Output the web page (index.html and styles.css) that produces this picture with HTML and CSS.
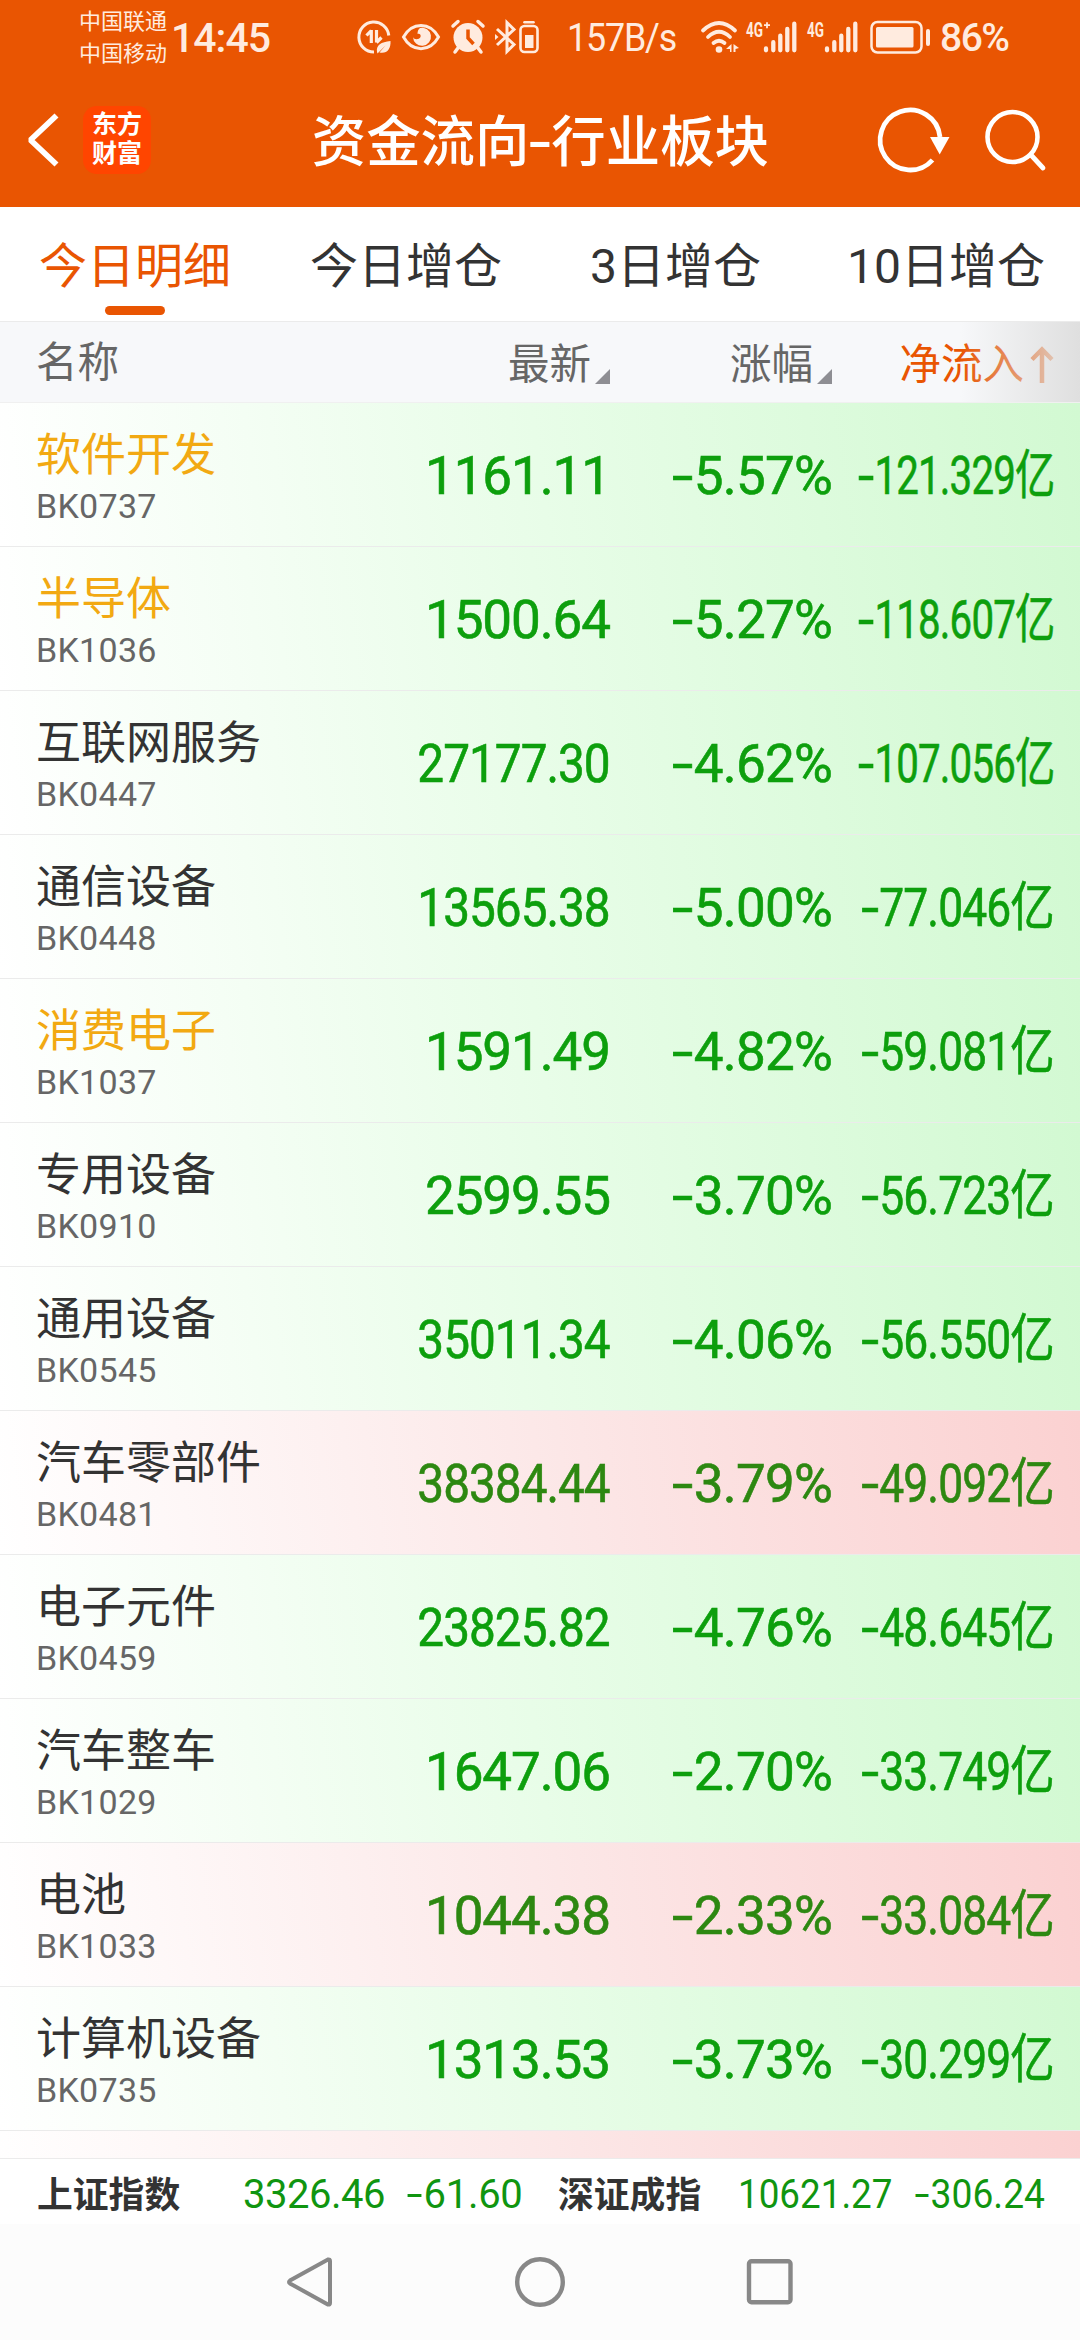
FILE: index.html
```html
<!DOCTYPE html>
<html lang="zh-CN">
<head>
    <meta charset="UTF-8" />
    <meta name="viewport" content="width=device-width, initial-scale=1.0">
    <title>资金流向-行业板块</title>
    <link rel="stylesheet" href="styles.css">
</head>
<body>
    <!-- System status bar -->
    <div class="status-bar">
        <div class="carriers">
            <span>中国联通</span>
            <span>中国移动</span>
        </div>
        <span class="clock">14:45</span>
        <div class="status-icons">
            <svg class="icon-data" width="36" height="36" viewBox="0 0 36 36">
                <path d="M32.800 16.500A15 15 0 1 0 18 33" fill="none" stroke="currentColor" stroke-width="3"/>
                <path d="M15.300 11v13M15.300 11.500l-4.800 5M20.500 11v12.500M20.500 23.500l5-5" fill="none" stroke="currentColor" stroke-width="3.200"/>
                <path d="M21 33c-1-7 4-10 13.500-11 .5 8-3.500 13-11 11.500l6-7-8 8z" fill="currentColor"/>
            </svg>
            <svg class="icon-eye" width="40" height="28" viewBox="0 0 40 28">
                <path d="M2.500 14C11-1.500 29-1.500 37.500 14 29 29.500 11 29.500 2.500 14z" fill="none" stroke="currentColor" stroke-width="3"/>
                <path d="M19 5a9 9 0 1 1-7 9c1 3 6 3 7.500 0 1-3-2-4-3-3 0-3 1-5 2.500-6z" fill="currentColor"/>
            </svg>
            <svg class="icon-alarm" width="34" height="34" viewBox="0 0 34 34">
                <circle cx="17" cy="17.500" r="14.500" fill="currentColor"/>
                <path d="M2 6l5-4.500M32 6l-5-4.500M7 28l-3 4M27 28l3 4" stroke="currentColor" stroke-width="3.500" stroke-linecap="round"/>
                <path d="M17 9.500v8.500l5.500 6" fill="none" stroke="#e95502" stroke-width="3.500"/>
            </svg>
            <svg class="icon-bluetooth" width="22" height="34" viewBox="0 0 22 34">
                <path d="M2 25L19 9.500l-7-7v29l7-7L2 9" fill="none" stroke="currentColor" stroke-width="3"/>
                <path d="M0 14l3.500 3L0 20z" fill="currentColor"/>
            </svg>
            <svg class="icon-device" width="20" height="34" viewBox="0 0 20 34">
                <path d="M5.500 2.200h9" stroke="currentColor" stroke-width="2.600" stroke-linecap="round"/>
                <rect x="1.500" y="6" width="17" height="26" rx="4" fill="none" stroke="currentColor" stroke-width="2.600"/>
                <rect x="6" y="15" width="8.500" height="13" fill="currentColor"/>
            </svg>
        </div>
        <span class="net-speed">157B/s</span>
        <svg class="icon-wifi" width="38" height="34" viewBox="0 0 38 34">
            <path d="M2 10.500q16-15 32 0M7 17q11-10.500 22 0M12.500 23q5.500-4.500 11 0" fill="none" stroke="currentColor" stroke-width="3.800" stroke-linecap="round"/>
            <circle cx="18" cy="29.500" r="3.300" fill="currentColor"/>
            <path d="M30.500 24v8H29v-3h-4zM32.500 24l5.500 4-3.500 1v3h-2z" fill="currentColor"/>
        </svg>
        <svg class="icon-signal" width="52" height="34" viewBox="0 0 52 34">
            <text x="0" y="17" class="signal-type" textLength="17" lengthAdjust="spacingAndGlyphs">4G</text>
            <path d="M18 5.200h6M21 2.200v6" stroke="currentColor" stroke-width="1.800"/>
            <path d="M20 28.500v1.800M27.300 22.200v8.100M34.300 15.700v14.600M41.300 9v21.300M48.300 3.700v26.600" stroke="currentColor" stroke-width="4.300" stroke-linecap="round"/>
        </svg>
        <svg class="icon-signal second" width="52" height="34" viewBox="0 0 52 34">
            <text x="0" y="17" class="signal-type" textLength="17" lengthAdjust="spacingAndGlyphs">4G</text>
            <path d="M20 28.500v1.800M27.300 22.200v8.100M34.300 15.700v14.600M41.300 9v21.300M48.300 3.700v26.600" stroke="currentColor" stroke-width="4.300" stroke-linecap="round"/>
        </svg>
        <svg class="icon-battery" width="62" height="34" viewBox="0 0 62 34">
            <rect x="1.500" y="2" width="50" height="30.500" rx="6" fill="none" stroke="currentColor" stroke-width="2.500"/>
            <rect x="6" y="7" width="37.500" height="20.500" rx="1.500" fill="currentColor"/>
            <path d="M58 11v13" stroke="currentColor" stroke-width="4" stroke-linecap="round"/>
        </svg>
        <span class="battery-level">86%</span>
    </div>

    <!-- App header -->
    <div class="header">
        <svg class="back-btn" width="36" height="56" viewBox="0 0 36 56">
            <path d="M31.500 3.500L5.500 28l26 24.500" fill="none" stroke="currentColor" stroke-width="5.800" stroke-linejoin="bevel"/>
        </svg>
        <div class="logo"><span>东方</span><span>财富</span></div>
        <h1>资金流向<span class="dash">-</span>行业板块</h1>
        <svg class="refresh-btn" width="74" height="68" viewBox="0 0 74 68">
            <path d="M54.500 54A30 30 0 1 1 62 31" fill="none" stroke="currentColor" stroke-width="4.800"/>
            <path d="M52 31h19.500l-9.800 17.500z" fill="currentColor"/>
        </svg>
        <svg class="search-btn" width="64" height="64" viewBox="0 0 64 64">
            <circle cx="29.500" cy="29" r="25" fill="none" stroke="currentColor" stroke-width="4.600"/>
            <path d="M48 47l12 13" stroke="currentColor" stroke-width="4.800" stroke-linecap="round"/>
        </svg>
    </div>

    <div class="tabs">
        <div class="tab active">今日明细</div>
        <div class="tab">今日增仓</div>
        <div class="tab">3日增仓</div>
        <div class="tab">10日增仓</div>
    </div>

    <div class="table-head">
        <span class="col-name">名称</span>
        <span class="col sortable">最新</span>
        <span class="col sortable">涨幅</span>
        <span class="col sorted">净流入<svg width="24" height="38" viewBox="0 0 24 38"><path d="M12 37V4M2 13.500L12 3.500l10 10" fill="none" stroke="currentColor" stroke-width="4.500"/></svg></span>
    </div>

    <div class="table">
        <div class="row">
            <div class="sector"><b class="held">软件开发</b><small>BK0737</small></div>
            <span class="value">1161.11</span>
            <span class="value percent"><i>-</i>5.57%</span>
            <span class="value flow-long"><i>-</i>121.329亿</span>
        </div>
        <div class="row">
            <div class="sector"><b class="held">半导体</b><small>BK1036</small></div>
            <span class="value">1500.64</span>
            <span class="value percent"><i>-</i>5.27%</span>
            <span class="value flow-long"><i>-</i>118.607亿</span>
        </div>
        <div class="row">
            <div class="sector"><b>互联网服务</b><small>BK0447</small></div>
            <span class="value price-long">27177.30</span>
            <span class="value percent"><i>-</i>4.62%</span>
            <span class="value flow-long"><i>-</i>107.056亿</span>
        </div>
        <div class="row">
            <div class="sector"><b>通信设备</b><small>BK0448</small></div>
            <span class="value price-long">13565.38</span>
            <span class="value percent"><i>-</i>5.00%</span>
            <span class="value flow"><i>-</i>77.046亿</span>
        </div>
        <div class="row">
            <div class="sector"><b class="held">消费电子</b><small>BK1037</small></div>
            <span class="value">1591.49</span>
            <span class="value percent"><i>-</i>4.82%</span>
            <span class="value flow"><i>-</i>59.081亿</span>
        </div>
        <div class="row">
            <div class="sector"><b>专用设备</b><small>BK0910</small></div>
            <span class="value">2599.55</span>
            <span class="value percent"><i>-</i>3.70%</span>
            <span class="value flow"><i>-</i>56.723亿</span>
        </div>
        <div class="row">
            <div class="sector"><b>通用设备</b><small>BK0545</small></div>
            <span class="value price-long">35011.34</span>
            <span class="value percent"><i>-</i>4.06%</span>
            <span class="value flow"><i>-</i>56.550亿</span>
        </div>
        <div class="row up">
            <div class="sector"><b>汽车零部件</b><small>BK0481</small></div>
            <span class="value price-long">38384.44</span>
            <span class="value percent"><i>-</i>3.79%</span>
            <span class="value flow"><i>-</i>49.092亿</span>
        </div>
        <div class="row">
            <div class="sector"><b>电子元件</b><small>BK0459</small></div>
            <span class="value price-long">23825.82</span>
            <span class="value percent"><i>-</i>4.76%</span>
            <span class="value flow"><i>-</i>48.645亿</span>
        </div>
        <div class="row">
            <div class="sector"><b>汽车整车</b><small>BK1029</small></div>
            <span class="value">1647.06</span>
            <span class="value percent"><i>-</i>2.70%</span>
            <span class="value flow"><i>-</i>33.749亿</span>
        </div>
        <div class="row up">
            <div class="sector"><b>电池</b><small>BK1033</small></div>
            <span class="value">1044.38</span>
            <span class="value percent"><i>-</i>2.33%</span>
            <span class="value flow"><i>-</i>33.084亿</span>
        </div>
        <div class="row">
            <div class="sector"><b>计算机设备</b><small>BK0735</small></div>
            <span class="value">1313.53</span>
            <span class="value percent"><i>-</i>3.73%</span>
            <span class="value flow"><i>-</i>30.299亿</span>
        </div>
        <div class="row up"></div>
    </div>

    <!-- Index ticker -->
    <div class="ticker">
        <b>上证指数</b>
        <span class="sh-price">3326.46</span>
        <span class="sh-change"><i>-</i>61.60</span>
        <b class="sz-name">深证成指</b>
        <span class="sz-price">10621.27</span>
        <span class="sz-change"><i>-</i>306.24</span>
    </div>

    <div class="nav-bar">
        <svg width="50" height="54" viewBox="0 0 50 54">
            <path d="M43 4.500L5 25.500q-2 1.500 0 3l38 21q2 .5 2-1.500V6q0-2-2-1.500z" fill="none" stroke="currentColor" stroke-width="4"/>
        </svg>
        <svg width="54" height="54" viewBox="0 0 54 54">
            <circle cx="27" cy="27" r="22.800" fill="none" stroke="currentColor" stroke-width="4.400"/>
        </svg>
        <svg width="50" height="54" viewBox="0 0 50 54">
            <rect x="4" y="6.200" width="41.500" height="41" rx="2.500" fill="none" stroke="currentColor" stroke-width="4.400"/>
        </svg>
    </div>
</body>
</html>
```

FILE: styles.css
```css
:root {
    --brand-color: #e95502;
    --status-color: #ffebdf;
    --text-color: #333333;
    --muted-color: #666666;
    --held-color: #f2a912;
    --down-color: #0d9f0d;
    --border-color: #ebebeb;
}

* {
    margin: 0;
    padding: 0;
    box-sizing: border-box;
}

body {
    width: 1080px;
    height: 2340px;
    overflow: hidden;
    display: flex;
    flex-direction: column;
    font-family: Roboto, "Noto Sans CJK SC", sans-serif;
    color: var(--text-color);
    background-color: #fff;
    white-space: nowrap;
}

svg {
    display: block;
    flex: none;
    overflow: visible;
}

i {
    font-style: normal;
    display: inline-block;
    transform: scaleX(1.45);
    margin: 0 0.1em 0 0.07em;
}

/* Status bar */
.status-bar {
    height: 74px;
    padding-left: 79px;
    display: flex;
    align-items: center;
    background-color: var(--brand-color);
    color: var(--status-color);
}

.carriers {
    width: 92px;
    padding-top: 2px;
    display: flex;
    flex-direction: column;
    font-size: 22px;
    line-height: 32px;
    font-weight: 400;
}

.clock {
    width: 185px;
    padding-top: 2px;
    font-size: 41px;
    font-weight: 500;
    letter-spacing: -1px;
}

.status-icons {
    width: 211px;
    display: flex;
    align-items: center;
}

.icon-eye { margin-left: 9px; }
.icon-alarm { margin-left: 10px; }
.icon-bluetooth { margin-left: 10px; }
.icon-device { margin-left: 2px; }

.net-speed {
    width: 134px;
    padding-top: 2px;
    font-size: 39px;
    letter-spacing: -1.3px;
    transform: scaleX(0.92);
    transform-origin: left center;
}

.icon-signal { margin-left: 7px; }
.icon-signal.second { margin-left: 9px; }

.signal-type {
    font-size: 21px;
    font-weight: 700;
    fill: currentColor;
}

.icon-battery { margin-left: 11px; }

.battery-level {
    margin-left: 8px;
    padding-top: 2px;
    font-size: 39px;
    font-weight: 500;
    letter-spacing: -1.500px;
}

/* App header */
.header {
    height: 133px;
    padding: 0 33px 2px 25px;
    display: flex;
    align-items: center;
    background-color: var(--brand-color);
    color: #fff;
}

.logo {
    width: 68px;
    height: 68px;
    margin: 1px 0 0 22px;
    padding-top: 4px;
    border-radius: 14px;
    background-color: #ff4500;
    font-size: 25px;
    line-height: 29px;
    font-weight: 700;
    text-align: center;
}

.logo span { display: block; }

h1 {
    width: 568px;
    margin-left: 161px;
    padding-top: 7px;
    font-size: 54.400px;
    line-height: 70px;
    font-weight: 500;
}

.dash {
    display: inline-block;
    width: 22px;
    text-align: center;
    transform: scaleX(1.35);
}

.search-btn { margin-left: 31px; }

/* Tabs */
.tabs {
    height: 115px;
    padding-left: 39px;
    display: grid;
    grid-template-columns: 271px 280px 257px auto;
    border-bottom: 1px solid var(--border-color);
}

.tab {
    position: relative;
    font-size: 48px;
    line-height: 119px;
}

.tab.active { color: var(--brand-color); }

.tab.active::after {
    content: "";
    position: absolute;
    left: 66px;
    top: 99px;
    width: 60px;
    height: 9px;
    border-radius: 5px;
    background-color: var(--brand-color);
}

/* Table */
.table-head,
.row {
    display: grid;
    grid-template-columns: 324px 250px 222px 222px;
    padding-left: 36px;
}

.table-head {
    position: relative;
    height: 81px;
    align-items: center;
    background-color: #f7f8fa;
    border-bottom: 1px solid #f0f0f0;
    color: var(--muted-color);
    font-size: 41.500px;
    line-height: 78px;
}

/* Fade over the right edge hinting at more columns */
.table-head::after {
    content: "";
    position: absolute;
    top: 0;
    right: 0;
    width: 120px;
    height: 80px;
    background: linear-gradient(to right, rgba(224, 224, 224, 0), #dfdfdf);
}

.col {
    display: flex;
    justify-content: flex-end;
    align-items: center;
    padding-top: 4px;
}

.sortable::after {
    content: "";
    width: 15px;
    height: 15px;
    margin: 23px 0 0 4px;
    background-color: #8e8e93;
    clip-path: polygon(100% 0, 100% 100%, 0 100%);
}

.sorted { color: var(--brand-color); }
.sorted svg { margin-left: 6px; }

.table {
    height: 1755px;
    overflow: hidden;
}

.row {
    height: 144px;
    align-items: center;
    border-bottom: 1px solid var(--border-color);
    background: linear-gradient(82deg, #fff, #e8fde8 50%, #d2f9d2);
    --value-color: var(--down-color);
}

.row.up {
    background: linear-gradient(82deg, #fff, #fce8e8 50%, #fbd1d1);
    --value-color: #2d8811;
}

.sector {
    display: flex;
    flex-direction: column;
}

.sector b {
    font-size: 45px;
    line-height: 63px;
    font-weight: 400;
}

.sector b.held { color: var(--held-color); }

.sector small {
    font-size: 34px;
    line-height: 38px;
    letter-spacing: 0.3px;
    color: var(--muted-color);
}

.value {
    justify-self: end;
    padding-top: 2px;
    font-size: 53px;
    line-height: 70px;
    -webkit-text-stroke: 0.6px currentColor;
    letter-spacing: -1.100px;
    color: var(--value-color);
    transform-origin: right center;
}

.percent { letter-spacing: -0.800px; }
.price-long { transform: scaleX(0.9); }
.flow { transform: scaleX(0.838); }
.flow-long { transform: scaleX(0.76); }

/* Index ticker */
.ticker {
    height: 66px;
    padding-left: 37px;
    display: flex;
    align-items: center;
    border-top: 1px solid var(--border-color);
    background-color: #fff;
    color: #109510;
    font-size: 40px;
}

.ticker b {
    width: 206px;
    padding-top: 1px;
    font-size: 35.800px;
    color: var(--text-color);
}

.ticker span {
    padding-top: 5px;
    transform-origin: left center;
}

.sh-price { width: 163px; letter-spacing: -0.500px; }
.sh-change { width: 152px; letter-spacing: -0.300px; }
.ticker .sz-name { width: 180px; }
.sz-price { width: 176px; transform: scaleX(0.92); }
.sz-change { transform: scaleX(0.93); }

/* System navigation */
.nav-bar {
    flex: 1;
    display: flex;
    justify-content: center;
    gap: 178px;
    padding-top: 31px;
    background-color: #fcfcfc;
    color: #888888;
}
```
